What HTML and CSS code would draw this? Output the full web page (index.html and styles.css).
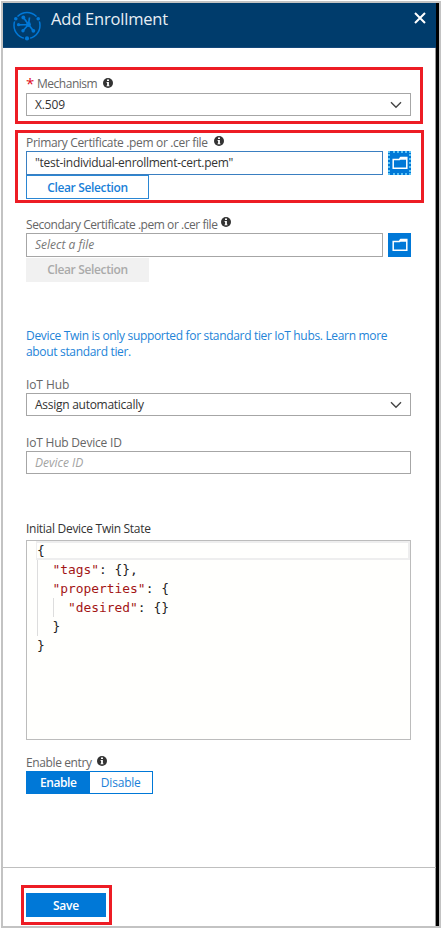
FILE: index.html
```html
<!DOCTYPE html>
<html lang="en">
<head>
<meta charset="utf-8">
<title>Add Enrollment</title>
<link rel="stylesheet" href="styles.css">
</head>
<body>
<svg class="defs" aria-hidden="true">
  <symbol id="info" viewBox="0 0 10 10"><circle cx="5" cy="5" r="5" fill="#333"/><path d="M4 1.6h2v1.5H4zM3.6 4h2.3v3.4h.6v.9h-3v-.9h.6V4.9h-.5z" fill="#fff"/></symbol>
  <symbol id="chevron" viewBox="0 0 12 8"><path d="M1 1.2 6 6.2 11 1.2" fill="none" stroke="#444" stroke-width="1.4"/></symbol>
  <symbol id="folder" viewBox="0 0 16 14"><path d="M1.2 12.2V3.6h6.2L8.8 1.5h6v10.7z" fill="none" stroke="#fff" stroke-width="1.5"/><path d="M8 1h7v2.8H7z" fill="#fff"/></symbol>
</svg>
<main class="blade">
  <header class="header">
    <svg class="logo" viewBox="0 0 30 30" fill="none" stroke="#0078d7" stroke-width="1.5">
      <circle cx="15" cy="14.5" r="13"/>
      <g fill="#003c6c" stroke="none"><circle cx="3.8" cy="7.8" r="2.8"/><circle cx="26.2" cy="7.8" r="2.8"/><circle cx="15" cy="27.5" r="3.2"/></g>
      <path stroke-width="1.7" d="M16.5 13.5 11.3 6.3M16.5 13.5 17.5 6.5M16.5 13.5 6.5 13.8M16.5 13.5 11 19.8M16.5 13.5 21.5 20"/>
      <g fill="#0078d7" stroke="none"><circle cx="16.5" cy="13.5" r="2.4"/><circle cx="11.3" cy="6.5" r="1.9"/><circle cx="6.5" cy="13.7" r="1.6"/><circle cx="11" cy="19.8" r="1.7"/><circle cx="21.4" cy="19.8" r="1.9"/><circle cx="3.8" cy="7.8" r="1.8"/><circle cx="26.2" cy="7.8" r="1.8"/><circle cx="15" cy="27.4" r="2.1"/></g>
    </svg>
    <h1 class="title">Add Enrollment</h1>
    <svg class="close" viewBox="0 0 12 12"><path d="M1 1 11 11M11 1 1 11" stroke="#fff" stroke-width="2"/></svg>
  </header>

  <section class="callout mechanism">
    <div class="label required"><span class="star">*</span><span class="t-mech">Mechanism</span><svg class="info"><use href="#info"/></svg></div>
    <div class="field"><span class="t-x509">X.509</span><svg class="chevron"><use href="#chevron"/></svg></div>
  </section>

  <section class="callout primary">
    <div class="label"><span class="t-primary">Primary Certificate .pem or .cer file</span><svg class="info"><use href="#info"/></svg></div>
    <div class="file-row"><div class="field active"><span class="t-file">"test-individual-enrollment-cert.pem"</span></div><button class="browse focused"><svg><use href="#folder"/></svg></button></div>
    <button class="clear">Clear Selection</button>
  </section>

  <section class="secondary">
    <div class="label"><span class="t-secondary">Secondary Certificate .pem or .cer file</span><svg class="info"><use href="#info"/></svg></div>
    <div class="file-row"><div class="field"><span class="hint">Select a file</span></div><button class="browse"><svg><use href="#folder"/></svg></button></div>
    <button class="clear disabled">Clear Selection</button>
  </section>

  <p class="notice">Device Twin is only supported for standard tier IoT hubs. Learn more<br>about standard tier.</p>

  <section class="hub">
    <div class="label"><span class="t-hub">IoT Hub</span></div>
    <div class="field"><span class="t-assign">Assign automatically</span><svg class="chevron"><use href="#chevron"/></svg></div>
  </section>
  <section class="device">
    <div class="label"><span class="t-device">IoT Hub Device ID</span></div>
    <div class="field"><span class="hint light">Device ID</span></div>
  </section>
  <section class="twin">
    <div class="label dark"><span class="t-twin">Initial Device Twin State</span></div>
    <div class="editor">
      <div class="line current">{</div>
      <div class="guide">
        <div class="line"><i>"tags"</i>: {},</div>
        <div class="line"><i>"properties"</i>: {</div>
        <div class="guide"><div class="line"><i>"desired"</i>: {}</div></div>
        <div class="line">}</div>
      </div>
      <div class="line">}</div>
    </div>
  </section>
  <section class="entry">
    <div class="label"><span class="t-entry">Enable entry</span><svg class="info"><use href="#info"/></svg></div>
    <div class="toggle"><button class="on">Enable</button><button>Disable</button></div>
  </section>
  <footer class="footer"><div class="save-mark"><button class="save">Save</button></div></footer>
</main>
</body>
</html>
```
FILE: styles.css
```css
* { box-sizing: border-box; }
body { margin: 0; width: 442px; height: 929px; background: #fff; padding: 1px; font: 12px/16px "Open Sans", "Noto Sans", sans-serif; color: #333; overflow: hidden; }
button { font: inherit; padding: 0; margin: 0; border: 0; border-radius: 0; display: flex; align-items: center; justify-content: center; }
.defs { position: absolute; width: 0; height: 0; }
.blade { height: 927px; border: 2px solid #c3c3c3; box-shadow: inset -3px 0 #000, inset -4px 0 #999; padding-right: 3px; display: flex; flex-direction: column; }
.header { height: 45px; flex: none; background: #003c6c; display: flex; align-items: flex-start; border-bottom: 1px solid #14487b; }
.logo { width: 30px; height: 30px; margin: 8px 0 0 9px; }
.title { margin: 4px 0 0 9px; font-size: 16.5px; line-height: 24px; font-weight: 400; color: #e8eef4; letter-spacing: -.2px; white-space: nowrap; }
.close { width: 12px; height: 12px; margin: 9px 10px 0 auto; }
.callout { border: 3px solid #ed1c24; }
.label { display: flex; align-items: flex-start; height: 18px; line-height: 19px; color: #666; white-space: nowrap; }
.label.dark { color: #333; }
.info { width: 10px; height: 10px; margin: 3px 0 0 6px; }
.field { height: 23px; border: 1px solid #a6a6a6; padding: 0 8px; display: flex; align-items: center; justify-content: space-between; background: #fff; white-space: nowrap; flex: 1; }
.field.active { border-color: #3a7fc1; }
.chevron { width: 12px; height: 8px; }
.hint { font-style: italic; color: #777; }
.hint.light { color: #a3a3a3; }
.t-mech { letter-spacing: -.48px; }
.t-x509 { letter-spacing: -.15px; }
.t-primary { letter-spacing: -.34px; }
.t-secondary { letter-spacing: -.45px; }
.t-file, .t-assign { letter-spacing: -.27px; }
.t-hub { letter-spacing: -.1px; }
.t-device { letter-spacing: -.2px; }
.t-twin { letter-spacing: -.29px; }
.t-entry { letter-spacing: -.38px; }
.mechanism { width: 408px; height: 57px; margin: 19px 0 0 12px; padding: 4px 9px 2px 8px; display: flex; flex-direction: column; }
.required { height: 19px; line-height: 20px; }
.mechanism .info { margin-top: 4px; }
.mechanism .field { flex: none; }
.star { color: #e00b1c; width: 11px; font-size: 15px; line-height: 18px; }
.primary { width: 409px; height: 73px; margin: 6px 0 0 12px; padding: 0 10px 0 8px; }
.file-row { display: flex; gap: 5px; height: 24px; }
.file-row .field { height: 24px; }
.browse { width: 23px; height: 24px; background: #0078d7; }
.browse svg { width: 16px; height: 14px; flex: none; }
.focused { border: 2px dotted #5cc3f5; }
.clear { width: 123px; height: 24px; border: 1px solid #2a86d3; background: #fff; color: #1a7fd8; font-weight: 600; letter-spacing: -.35px; }
.primary .clear { padding-top: 1px; }
.clear.disabled { background: #f1f1f1; border-color: #f1f1f1; color: #aaa; margin-top: 1px; }
.secondary { margin: 12px 25px 0 23px; }
.secondary .label { line-height: 20px; }
.secondary .info { margin: 2px 0 0 4px; }
.notice { margin: 46px 0 0 23px; color: #2384d8; line-height: 16px; letter-spacing: -.33px; white-space: nowrap; }
.hub { margin: 15px 25px 0 23px; }
.device { margin: 17px 25px 0 23px; }
.twin { margin: 45px 25px 0 23px; }
.twin .label { height: 21px; }
.editor { height: 200px; border: 1px solid #bcbcbc; background: #fffffd; padding-left: 10px; font: 12.9px/19px "DejaVu Sans Mono", monospace; color: #222; }
.editor i { font-style: normal; color: #a31515; }
.line { height: 19px; white-space: pre; }
.current { border: solid #eee; border-width: 2px 2px 2px 1px; line-height: 16px; margin-left: -1px; }
.guide { border-left: 1px solid #ddd; padding-left: 14.5px; }
.entry { margin: 13px 0 0 23px; }
.entry .info { margin-left: 5px; }
.toggle { display: flex; width: 127px; height: 23px; border: 1px solid #0078d7; }
.toggle button { flex: 1; background: #fff; color: #1a7fd8; letter-spacing: -.2px; }
.toggle .on { background: #0078d7; color: #fff; font-weight: 600; letter-spacing: -.4px; }
.footer { margin-top: auto; height: 59px; flex: none; border-top: 1px solid #bfbfbf; padding: 17px 0 0 18px; }
.save-mark { width: 91px; height: 40px; border: 3px solid #ed1c24; padding: 5px 2px; }
.save { width: 80px; height: 24px; padding-top: 1px; background: #0078d7; color: #fff; font-weight: 600; letter-spacing: -.2px; }
```
